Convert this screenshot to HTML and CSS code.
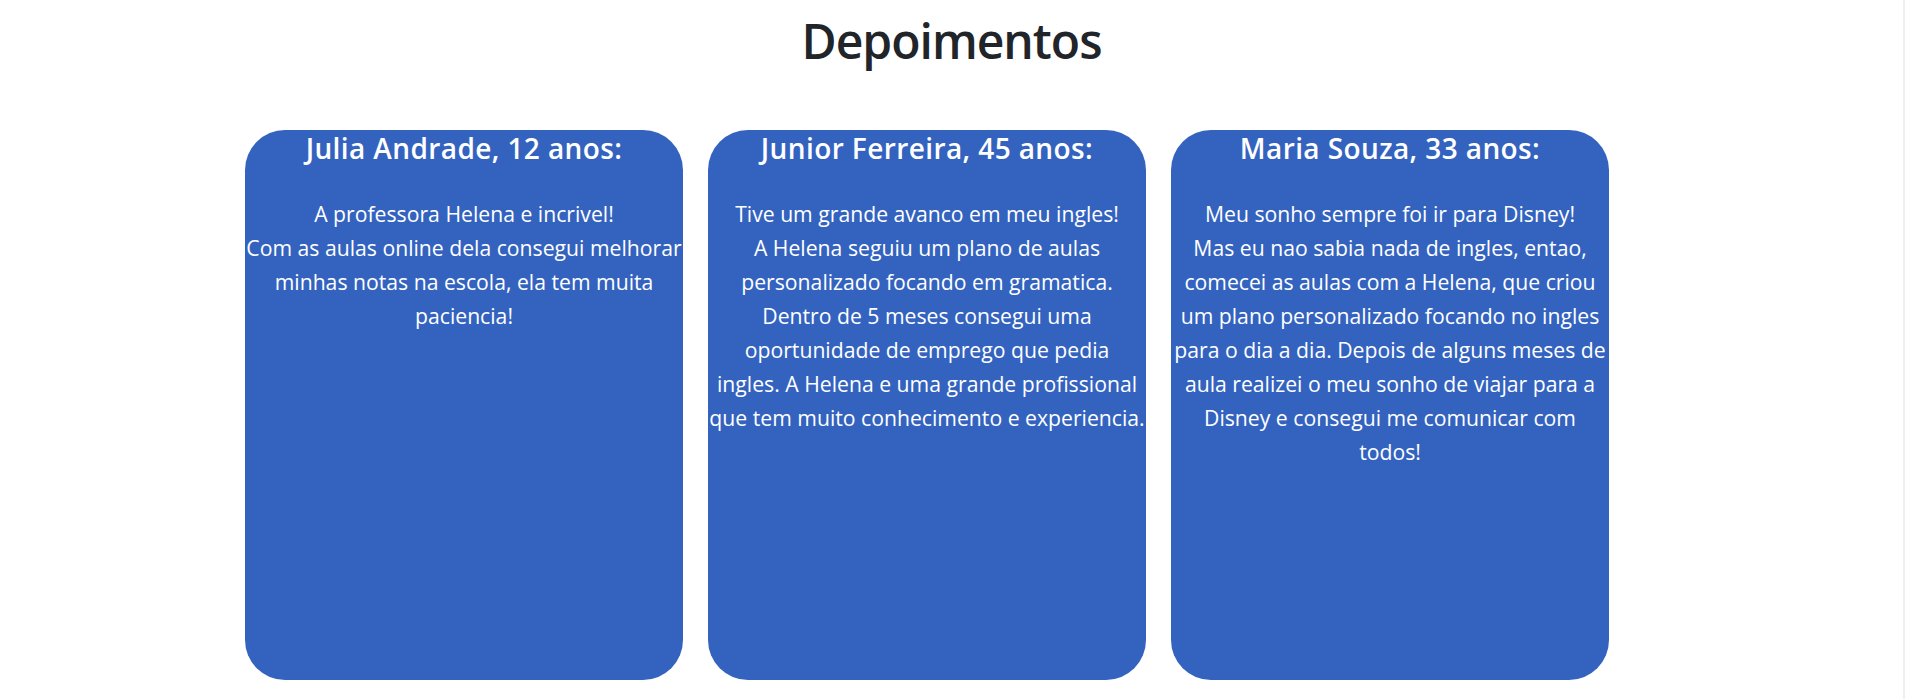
FILE: index.html
```html
<!DOCTYPE html>
<html lang="pt-BR">
<head>
    <meta charset="UTF-8">
    <meta name="viewport" content="width=device-width, initial-scale=1.0">
    <title>Depoimentos</title>
    <link rel="stylesheet" href="styles.css">
</head>
<body>
    <section class="depoimentos">
        <h1 class="titulo">Depoimentos</h1>
        <div class="cards">
            <div class="card">
                <h2>Julia Andrade, 12 anos:</h2>
                <p>A professora Helena e incrivel!<br>Com as aulas online dela consegui melhorar minhas notas na escola, ela tem muita paciencia!</p>
            </div>
            <div class="card">
                <h2>Junior Ferreira, 45 anos:</h2>
                <p>Tive um grande avanco em meu ingles!<br>A Helena seguiu um plano de aulas personalizado focando em gramatica. Dentro de 5 meses consegui uma oportunidade de emprego que pedia<br>ingles. A Helena e uma grande profissional que tem muito conhecimento e experiencia.</p>
            </div>
            <div class="card">
                <h2>Maria Souza, 33 anos:</h2>
                <p>Meu sonho sempre foi ir para Disney!<br>Mas eu nao sabia nada de ingles, entao, comecei as aulas com a Helena, que criou um plano personalizado focando no ingles para o dia a dia. Depois de alguns meses de aula realizei o meu sonho de viajar para a Disney e consegui me comunicar com todos!</p>
            </div>
        </div>
    </section>
</body>
</html>
```

FILE: styles.css
```css
body {
    margin: 0;
    padding: 0;
    background: #fff;
    color: #212529;
    font-family: "Open Sans", "Noto Sans", sans-serif;
    border-right: 2px solid #eeeeee;
    min-height: 699px;
    box-sizing: border-box;
}

.titulo {
    text-align: center;
    font-size: 48px;
    font-weight: 600;
    letter-spacing: -1px;
    margin: 0;
    padding-top: 12px;
    line-height: 1.2;
}

.cards {
    display: flex;
    gap: 25px;
    padding-left: 245px;
    margin-top: 60px;
}

.card {
    background: #3363bf;
    color: #fff;
    width: 438px;
    height: 550px;
    border-radius: 40px;
    text-align: center;
}

.card h2 {
    margin: 0;
    padding-top: 2px;
    font-size: 28px;
    font-weight: 600;
    letter-spacing: 0.4px;
    line-height: 1.2;
}

.card p {
    margin: 32px 0 0;
    font-size: 21.2px;
    line-height: 34px;
}
```
